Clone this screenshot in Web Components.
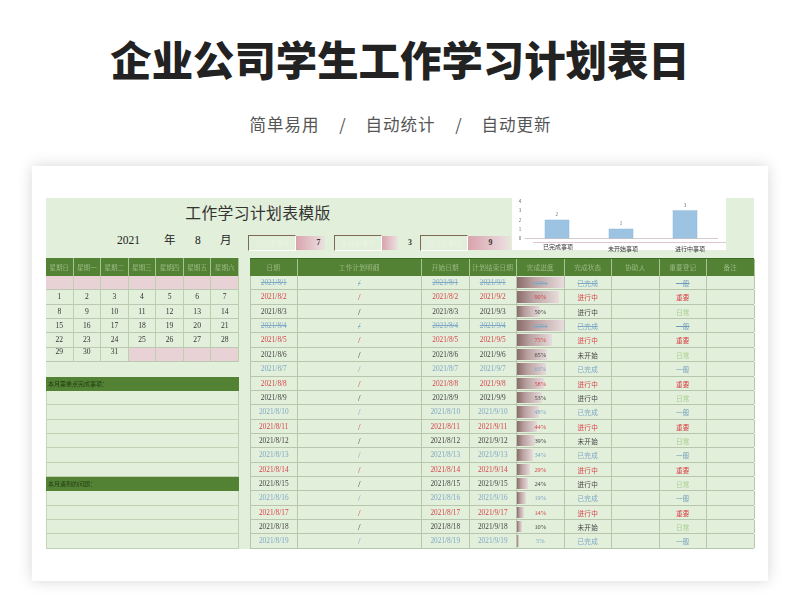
<!DOCTYPE html>
<html lang="zh"><head><meta charset="utf-8"><style>
html,body{margin:0;padding:0;background:#fff;}
body{width:800px;height:613px;overflow:hidden;font-family:"Noto Sans CJK SC","Noto Sans",sans-serif;}
</style></head><body>
<promo-page></promo-page>
<script>
const SERIF='"Liberation Serif","Noto Sans CJK SC",serif';
function shell(host,html){const r=host.attachShadow({mode:'open'});r.innerHTML=html;return r;}

class PromoPage extends HTMLElement{connectedCallback(){shell(this,`<style>
:host{display:block;width:800px;height:613px;box-sizing:border-box;padding-top:33px;}
h1{margin:0;height:50px;line-height:50px;text-align:center;font-size:41.4px;font-weight:900;color:#222;white-space:nowrap;}
.sub{margin-top:29px;padding-left:1px;height:24px;line-height:24px;display:flex;justify-content:center;font-size:16.5px;color:#555;letter-spacing:1px;}
.sub i{font-style:normal;width:46px;text-align:center;letter-spacing:0;}
.card{margin:30px 32px 0;height:415px;box-sizing:border-box;background:#fff;padding:32px 14px;box-shadow:0 0 14px rgba(0,0,0,.16);}
</style><h1>企业公司学生工作学习计划表日</h1>
<div class="sub"><span>简单易用</span><i>/</i><span>自动统计</span><i>/</i><span>自动更新</span></div>
<div class="card"><plan-sheet></plan-sheet></div>`);}}

class PlanSheet extends HTMLElement{connectedCallback(){shell(this,`<style>
:host{display:block;width:708px;height:351px;background:#e2efda;filter:blur(.3px);}
.top{display:flex;height:60px;}
.head{width:466px;}
.title{width:424px;height:30px;text-align:center;font:400 15.8px/30px "Noto Sans CJK SC",serif;color:#333;letter-spacing:.35px;}
.meta{display:flex;margin-top:7px;}
.date{width:193px;height:16px;display:flex;font:400 11.5px/10px ${SERIF};color:#222;padding-left:71px;box-sizing:border-box;}
.date span:nth-child(1){width:47px}.date span:nth-child(2){width:31px}.date span:nth-child(3){width:25px}
.stats{margin-left:10px;}
.bottom{display:flex;gap:11px;}
</style><div class="top"><div class="head"><div class="title">工作学习计划表模版</div>
<div class="meta"><div class="date"><span>2021</span><span>年</span><span>8</span><span>月</span></div>
<stat-row class="stats"></stat-row></div></div><task-chart></task-chart></div>
<div class="bottom"><month-panel></month-panel><task-table></task-table></div>`);}}

class StatRow extends HTMLElement{connectedCallback(){
const s=[['已完成事项',7,29,86,-22],['未开始事项',3,16,86,2],['进行中事项',9,43,92,-42]];
shell(this,`<style>
:host{display:flex;}
.s{display:flex;height:16px;}
.box{width:48px;flex:none;box-sizing:border-box;border:1.2px solid #fff;border-top-color:#7c6a55;border-left-color:#7c6a55;font:300 6.8px/14px "Noto Sans CJK SC",sans-serif;color:#eef6e8;text-align:center;white-space:nowrap;overflow:hidden;}
.n{flex:1;font:700 7.8px/16px ${SERIF};color:#333;text-align:center;}
.g{flex:none;height:14px;margin-top:1px;background:linear-gradient(90deg,#d9a3ad,#ead9dc 85%,#e4e6d8);}
.v{display:flex;flex:1;}
</style>`+s.map(([l,n,g,t,m])=>`<div class="s" style="width:${t}px"><div class="box">${l}</div>
<div class="v"><div class="g" style="width:${g}px"></div><div class="n" style="margin-left:${m}px">${n}</div></div></div>`).join(''));}}

class TaskChart extends HTMLElement{connectedCallback(){shell(this,`<style>
:host{display:block;width:214px;height:52px;background:#fff;}
svg{display:block;overflow:visible}
text{font-family:"Noto Sans CJK SC",sans-serif;text-anchor:middle;}
.t{font-size:4.5px;fill:#666}.l{font-size:6px;fill:#333}
</style><svg width="214" height="52" viewBox="0 0 214 52">
<text class="t" x="8" y="4.5">4</text><text class="t" x="8" y="14">3</text><text class="t" x="8" y="23.5">2</text><text class="t" x="8" y="32.5">1</text><text class="t" x="8" y="42">0</text>
<rect x="33" y="22" width="24" height="18.5" fill="#9dc3e2" stroke="#8db6d8" stroke-width=".5"/>
<rect x="97" y="31" width="24" height="9.5" fill="#9dc3e2" stroke="#8db6d8" stroke-width=".5"/>
<rect x="161" y="12.7" width="24" height="27.8" fill="#9dc3e2" stroke="#8db6d8" stroke-width=".5"/>
<path d="M12.5 40.5H206" stroke="#c9bcc4" stroke-width=".8"/><path d="M21 44.5H214" stroke="#d8b9c0" stroke-width=".8"/>
<text class="t" x="44.7" y="17.5">2</text><text class="t" x="109" y="26.5">1</text><text class="t" x="173" y="8.5">3</text>
<text class="l" x="46" y="51">已完成事项</text><text class="l" x="111" y="53">未开始事项</text><text class="l" x="178" y="53">进行中事项</text>
</svg>`);}}

class MonthPanel extends HTMLElement{connectedCallback(){
const wk=['星期日','星期一','星期二','星期三','星期四','星期五','星期六'];
const days=[...Array(7).fill(''),1,2,3,4,5,6,7,8,9,10,11,12,13,14,15,16,17,18,19,20,21,22,23,24,25,26,27,28,29,30,31,'','','',''];
const blank=n=>Array.from({length:n},()=>'<div class="b"></div>').join('');
shell(this,`<style>
:host{display:block;width:193px;flex:none;}
.cal,.hd{display:grid;grid-template-columns:repeat(7,1fr);}
.cal{grid-auto-rows:14.37px;}
.hd{height:18px;}
.h{background:#548235;color:#b9d0a6;font:300 6.6px/18px "Noto Sans CJK SC",sans-serif;text-align:center;border-right:1px solid #a9c297;box-sizing:border-box;white-space:nowrap;}
.d{box-sizing:border-box;border-right:1px solid #bcd0ae;border-bottom:1px solid #bcc9b2;font:400 7.6px/14px ${SERIF};color:#333;text-align:center;}
.d.up{line-height:8px;}
.p{background:#e8d2d6;}
.gap{height:14.37px;}
.ban{box-sizing:border-box;height:14.37px;background:#548235;font:6px/14px "Noto Sans CJK SC",sans-serif;color:#1f3a10;padding-left:2px;}
.b{box-sizing:border-box;height:14.37px;border-bottom:1px solid #bfd0b3;border-right:1px solid #bfd0b3;border-left:1px solid #c5d6b8;}
</style><div class="hd">${wk.map(w=>`<div class="h">${w}</div>`).join('')}</div>
<div class="cal">${days.map((d,i)=>`<div class="d${d===''?' p':''}${i>=35&&d!==''?' up':''}">${d}</div>`).join('')}</div>
<div class="gap"></div><div class="ban">本月需重点完成事项：</div>${blank(6)}<div class="ban">本月遇到的问题：</div>${blank(4)}`);}}

class TaskTable extends HTMLElement{connectedCallback(){
const C={b:'#7fa9c6',r:'#d9434a',k:'#444'};
const pct=[100,90,50,100,75,65,63,58,53,48,44,39,34,29,24,19,14,10,5];
const st=['已完成','进行中','进行中','已完成','进行中','未开始','已完成','进行中','进行中','已完成','进行中','未开始','已完成','进行中','进行中','已完成','进行中','未开始','已完成'];
const cols='47.5px 124.5px repeat(7,47.5px)';
const rows=pct.map((p,i)=>{const d=i+1,k=['b','r','k'][i%3],strike=(i==0||i==3),c=C[k];
const lvl=[['一般','#6f9cbc'],['重要','#d9434a'],['日常','#a9cf8f']][i%3];
const deco=strike?'text-decoration:line-through;':'';
return `<div class="r" style="color:${c}"><div style="${deco}">2021/8/${d}</div><div class="m" style="${deco}">/</div><div style="${deco}">2021/8/${d}</div><div style="${deco}">2021/9/${d}</div>
<div class="pc"><span class="bar" style="width:${p}%"></span><span class="tx" style="${deco}">${p}%</span></div>
<div class="cj" style="${deco}">${st[i]}</div><div></div><div class="cj" style="color:${lvl[1]};${deco}">${lvl[0]}</div><div></div></div>`}).join('');
shell(this,`<style>
:host{display:block;width:504px;flex:none;}
.h,.r{display:grid;grid-template-columns:${cols};}
.h{height:18px;background:#548235;border-top:1px solid #3d6b25;box-sizing:border-box;}
.h div{font:300 6.6px/17px "Noto Sans CJK SC",sans-serif;color:#b9d0a6;text-align:center;border-right:1px solid #a9c297;letter-spacing:.2px;box-sizing:border-box;}
.r{height:14.37px;box-sizing:border-box;border-bottom:1px solid #b7c6ad;}
.r>div{position:relative;font:7.3px/14px ${SERIF};text-align:center;border-right:1px solid #b7c6ad;box-sizing:border-box;white-space:nowrap;overflow:hidden;}
.r>div:first-child{border-left:1px solid #b7c6ad;}
.r>div.m{font-size:9px;}
.r>div.cj{font:400 6.6px/14px "Noto Sans CJK SC",sans-serif;letter-spacing:.2px;}
.r>div.pc{font-size:6.4px;}
.bar{position:absolute;left:0;top:1px;bottom:1px;background:linear-gradient(90deg,#8a6b6b,#b9a0a0 35%,#e8dcdc 100%);}
.tx{position:relative;}
</style><div class="h"><div>日期</div><div>工作计划明细</div><div>开始日期</div><div>计划结束日期</div><div>完成进度</div><div>完成状态</div><div>协助人</div><div>重要登记</div><div>备注</div></div>${rows}`);}}

customElements.define('promo-page',PromoPage);
customElements.define('plan-sheet',PlanSheet);
customElements.define('stat-row',StatRow);
customElements.define('task-chart',TaskChart);
customElements.define('month-panel',MonthPanel);
customElements.define('task-table',TaskTable);
</script></body></html>
